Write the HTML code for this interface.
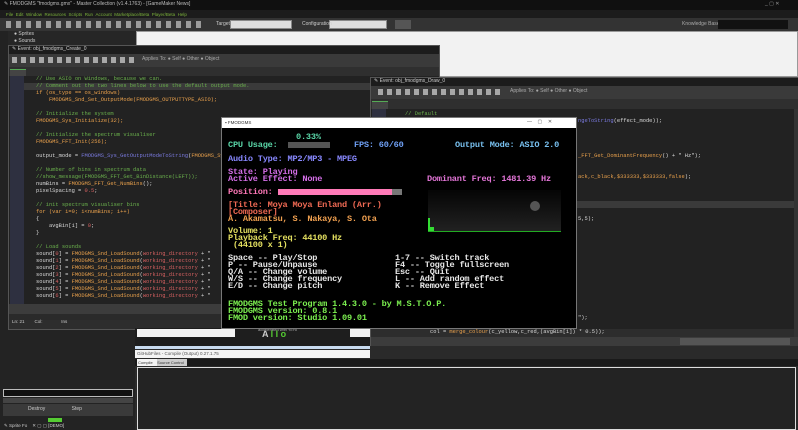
<!DOCTYPE html>
<html><head><meta charset="utf-8"><style>
*{margin:0;padding:0;box-sizing:border-box}
body{width:798px;height:430px;overflow:hidden;background:#2b2b2b;position:relative;font-family:"Liberation Sans",sans-serif}
.a{position:absolute}
.t{font-size:5px;color:#ccc;white-space:nowrap;line-height:7px}
.code{font-family:"Liberation Mono",monospace;font-size:5.4px;line-height:7px;white-space:pre;color:#d8d8d8}
.c{color:#6ab04c}.o{color:#e8a04c}.b{color:#7a7adf}.r{color:#d46060}
.fm{font-family:"Liberation Mono",monospace;font-weight:bold;font-size:8.6px;line-height:7px;white-space:pre;letter-spacing:-0.2px}
.ico{position:absolute;width:7px;height:7px;top:3px}
</style></head><body>
<!-- title bar -->
<div class="a" style="left:0;top:0;width:798px;height:10px;background:#101010"></div>
<div class="a t" style="left:4px;top:1px;color:#bbb">✎ FMODGMS "fmodgms.gmx" - Master Collection (v1.4.1763) - [GameMaker News]</div>
<div class="a t" style="left:765px;top:1px;color:#999">_ ▢ ✕</div>
<!-- menu -->
<div class="a" style="left:0;top:10px;width:798px;height:8px;background:#1c1c1c"></div>
<div class="a t" style="left:6px;top:11px;color:#7bb23a;font-size:4.5px">File &nbsp;Edit &nbsp;Window &nbsp;Resources &nbsp;Scripts &nbsp;Run &nbsp;Account &nbsp;Marketplace/Beta &nbsp;Player/Beta &nbsp;Help</div>
<!-- toolbar -->
<div class="a" style="left:0;top:18px;width:798px;height:13px;background:#333"></div>
<div class="a" style="left:6px;top:21px;width:200px;height:7px;background:repeating-linear-gradient(90deg,#9a9a9a 0 5px,transparent 5px 10px)"></div>
<div class="a" style="left:230px;top:20px;width:62px;height:9px;background:#ddd;border:1px solid #888"></div>
<div class="a" style="left:329px;top:20px;width:58px;height:9px;background:#ddd;border:1px solid #888"></div>
<div class="a t" style="left:216px;top:21px">Target</div>
<div class="a t" style="left:302px;top:21px">Configuration</div>
<div class="a" style="left:395px;top:20px;width:16px;height:9px;background:#555"></div>
<div class="a t" style="left:682px;top:21px;color:#aaa">Knowledge Base</div>
<div class="a" style="left:718px;top:20px;width:70px;height:9px;background:#111"></div>
<!-- resource tree + white box -->
<div class="a" style="left:0;top:31px;width:136px;height:14px;background:#262626"></div>
<div class="a t" style="left:14px;top:31px">● Sprites<br>● Sounds</div>
<div class="a" style="left:136px;top:31px;width:662px;height:46px;background:#f2f2f2;border:1px solid #999"></div>
<div class="a" style="left:0;top:31px;width:8px;height:399px;background:#222"></div>
<!-- left editor -->
<div class="a" style="left:8px;top:45px;width:432px;height:285px;background:#2d2d2d;border:1px solid #555"></div>
<div class="a" style="left:9px;top:46px;width:430px;height:8px;background:#1c1c1c"></div>
<div class="a t" style="left:12px;top:46px">✎ Event: obj_fmodgms_Create_0</div>
<div class="a" style="left:9px;top:54px;width:430px;height:13px;background:#3a3a3a"></div>
<div class="a" style="left:12px;top:57px;width:125px;height:6px;background:repeating-linear-gradient(90deg,#a8a8a8 0 5px,transparent 5px 9px)"></div>
<div class="a t" style="left:142px;top:56px;color:#aaa">Applies To: ● Self ● Other ● Object</div>
<div class="a" style="left:9px;top:67px;width:430px;height:9px;background:#2f2f2f"></div>
<div class="a" style="left:10px;top:69px;width:16px;height:7px;background:#444;border-top:1px solid #5a5"></div>
<div class="a" style="left:9px;top:76px;width:430px;height:228px;background:#222"></div>
<div class="a" style="left:10px;top:76px;width:14px;height:228px;background:#2e3040"></div>
<div class="a" style="left:24px;top:83px;width:415px;height:7px;background:#3a3a3a"></div>
<div class="a code" style="left:36px;top:76px"><span class="c">// Use ASIO on Windows, because we can.</span>
<span class="c">// Comment out the two lines below to use the default output mode.</span>
<span class="o">if (os_type == os_windows)</span>
<span class="o">    FMODGMS_Snd_Set_OutputMode(FMODGMS_OUTPUTTYPE_ASIO);</span>

<span class="c">// Initialize the system</span>
<span class="o">FMODGMS_Sys_Initialize(32);</span>

<span class="c">// Initialize the spectrum visualiser</span>
<span class="o">FMODGMS_FFT_Init(256);</span>

output_mode = <span class="b">FMODGMS_Sys_GetOutputModeToString</span>(<span class="o">FMODGMS_Sys_</span>

<span class="c">// Number of bins in spectrum data</span>
<span class="c">//show_message(FMODGMS_FFT_Get_BinDistance(LEFT));</span>
numBins = <span class="o">FMODGMS_FFT_Get_NumBins</span>();
pixelSpacing = <span class="r">0.5</span>;

<span class="c">// init spectrum visualiser bins</span>
<span class="o">for (var i=0; i&lt;numBins; i++)</span>
{
    avgBin[i] = <span class="r">0</span>;
}

<span class="c">// Load sounds</span>
sound[<span class="r">0</span>] = <span class="o">FMODGMS_Snd_LoadSound</span>(<span class="r">working_directory</span> + "
sound[<span class="r">1</span>] = <span class="o">FMODGMS_Snd_LoadSound</span>(<span class="r">working_directory</span> + "
sound[<span class="r">2</span>] = <span class="o">FMODGMS_Snd_LoadSound</span>(<span class="r">working_directory</span> + "
sound[<span class="r">3</span>] = <span class="o">FMODGMS_Snd_LoadSound</span>(<span class="r">working_directory</span> + "
sound[<span class="r">4</span>] = <span class="o">FMODGMS_Snd_LoadSound</span>(<span class="r">working_directory</span> + "
sound[<span class="r">5</span>] = <span class="o">FMODGMS_Snd_LoadSound</span>(<span class="r">working_directory</span> + "
sound[<span class="r">6</span>] = <span class="o">FMODGMS_Snd_LoadSound</span>(<span class="r">working_directory</span> + "</div>
<div class="a" style="left:9px;top:304px;width:430px;height:10px;background:#3c3c3c"></div>
<div class="a" style="left:9px;top:314px;width:430px;height:6px;background:#2a2a2a"></div>
<div class="a t" style="left:12px;top:318px;font-size:4.5px">Ln: 21 &nbsp;&nbsp;&nbsp;&nbsp;&nbsp;&nbsp; Col: &nbsp;&nbsp;&nbsp;&nbsp;&nbsp;&nbsp;&nbsp;&nbsp;&nbsp;&nbsp;&nbsp;&nbsp;&nbsp; Ins</div>
<!-- lower left panel -->
<div class="a" style="left:0;top:330px;width:135px;height:100px;background:#232323"></div>
<div class="a" style="left:3px;top:389px;width:130px;height:8px;border:1px solid #bbb;background:#111"></div>
<div class="a" style="left:3px;top:398px;width:130px;height:5px;background:#444"></div>
<div class="a" style="left:3px;top:404px;width:130px;height:12px;background:#3a3a3a"></div>
<div class="a t" style="left:28px;top:406px">Destroy &nbsp;&nbsp;&nbsp;&nbsp;&nbsp;&nbsp;&nbsp;&nbsp;&nbsp;&nbsp;&nbsp;&nbsp;&nbsp;&nbsp;&nbsp;&nbsp;&nbsp; Step</div>
<div class="a" style="left:48px;top:418px;width:14px;height:4px;background:#5c3"></div>
<div class="a t" style="left:4px;top:422px;font-size:4.5px">✎ Sprite Fo &nbsp;&nbsp; ✕ ▢ ▢ [DEMO]</div>
<!-- right editor -->
<div class="a" style="left:370px;top:77px;width:428px;height:287px;background:#2d2d2d;border:1px solid #555"></div>
<div class="a" style="left:371px;top:78px;width:427px;height:8px;background:#1c1c1c"></div>
<div class="a t" style="left:374px;top:78px">✎ Event: obj_fmodgms_Draw_0</div>
<div class="a" style="left:371px;top:86px;width:427px;height:13px;background:#3a3a3a"></div>
<div class="a" style="left:378px;top:89px;width:125px;height:6px;background:repeating-linear-gradient(90deg,#a8a8a8 0 5px,transparent 5px 9px)"></div>
<div class="a t" style="left:510px;top:88px;color:#aaa">Applies To: ● Self ● Other ● Object</div>
<div class="a" style="left:371px;top:99px;width:427px;height:10px;background:#2f2f2f"></div>
<div class="a" style="left:372px;top:101px;width:16px;height:8px;background:#444;border-top:1px solid #5a5"></div>
<div class="a" style="left:371px;top:109px;width:423px;height:220px;background:#222"></div>
<div class="a" style="left:372px;top:109px;width:14px;height:220px;background:#2e3040"></div>
<div class="a" style="left:371px;top:201px;width:423px;height:7px;background:#3a3a3a"></div>
<div class="a code" style="left:405px;top:111px"><span class="c">// Default</span></div>
<div class="a code" style="left:578px;top:118px"><span class="b">ngeToString</span>(effect_mode));</div>
<div class="a code" style="left:578px;top:153px"><span class="o">_FFT_Get_DominantFrequency</span>() + " Hz");</div>
<div class="a code" style="left:578px;top:174px"><span class="o">ack,c_black,$333333,$333333,false</span>);</div>
<div class="a code" style="left:578px;top:216px">5,5);</div>
<div class="a code" style="left:578px;top:315px">");</div>
<div class="a code" style="left:430px;top:329px">col = <span class="o">merge_colour</span>(c_yellow,c_red,(avgBin[i]) * 0.5));</div>
<div class="a" style="left:794px;top:109px;width:4px;height:228px;background:#333"></div>
<div class="a" style="left:371px;top:337px;width:427px;height:9px;background:#3c3c3c"></div>
<div class="a" style="left:680px;top:338px;width:110px;height:7px;background:#555"></div>
<div class="a t" style="left:374px;top:357px;font-size:4.5px">Ln: 31 &nbsp;&nbsp;&nbsp;&nbsp;&nbsp;&nbsp; Col: &nbsp;&nbsp;&nbsp;&nbsp;&nbsp;&nbsp;&nbsp;&nbsp;&nbsp;&nbsp;&nbsp;&nbsp;&nbsp; Ins</div>
<!-- middle strip -->
<div class="a" style="left:135px;top:328px;width:235px;height:18px;background:#1e1e1e"></div>
<div class="a" style="left:137px;top:329px;width:98px;height:8px;background:#f4f4f4"></div>
<div class="a t" style="left:258px;top:326px;font-size:4px;color:#aaa">accelerated with YoYo</div>
<div class="a t" style="left:262px;top:331px;font-size:9px;color:#ccc;font-weight:bold">A <span style="color:#5c3">l l o</span></div>
<div class="a" style="left:350px;top:329px;width:20px;height:8px;background:#f4f4f4"></div>
<!-- bottom output window -->
<div class="a" style="left:135px;top:346px;width:663px;height:84px;background:#2a2a2a"></div>
<div class="a" style="left:135px;top:346px;width:235px;height:3px;background:#c9dcf0"></div>
<div class="a" style="left:135px;top:350px;width:235px;height:8px;background:#f4f4f4"></div>
<div class="a t" style="left:137px;top:350px;color:#555;font-size:4.5px">GitHubFiles - Compile (Output) 0.27.1.75</div>
<div class="a" style="left:135px;top:359px;width:663px;height:7px;background:#1a1a1a"></div>
<div class="a" style="left:137px;top:359px;width:20px;height:7px;background:#f4f4f4"></div>
<div class="a" style="left:157px;top:359px;width:30px;height:7px;background:#ccc"></div>
<div class="a t" style="left:138px;top:359px;color:#333;font-size:4px">Compile &nbsp;&nbsp; Source Control</div>
<div class="a" style="left:137px;top:367px;width:659px;height:63px;background:#232323;border:1px solid #ddd"></div>
<!-- FMOD window -->
<div class="a" style="left:221px;top:117px;width:356px;height:212px;background:#000;border:1px solid #777"></div>
<div class="a" style="left:222px;top:118px;width:354px;height:10px;background:#fff"></div>
<div class="a t" style="left:225px;top:119px;color:#333;font-size:4.5px">▪ FMODGMS</div>
<div class="a t" style="left:527px;top:119px;color:#555">— &nbsp;&nbsp; ▢ &nbsp;&nbsp; ✕</div>
<div class="a fm" style="left:296px;top:134px;color:#5ad6a8">0.33%</div>
<div class="a" style="left:288px;top:142px;width:42px;height:6px;background:#555"></div>
<div class="a fm" style="left:228px;top:142px;color:#5ad6a8">CPU Usage:</div>
<div class="a fm" style="left:354px;top:142px;color:#6fa0f5">FPS: 60/60</div>
<div class="a fm" style="left:455px;top:142px;color:#78c0ef">Output Mode: ASIO 2.0</div>
<div class="a fm" style="left:228px;top:156px;color:#8888ff">Audio Type: MP2/MP3 - MPEG</div>
<div class="a fm" style="left:228px;top:169px;color:#d56fe8">State: Playing
Active Effect: None</div>
<div class="a fm" style="left:427px;top:176px;color:#e476d8">Dominant Freq: 1481.39 Hz</div>
<div class="a fm" style="left:228px;top:189px;color:#ff78b8">Position:</div>
<div class="a" style="left:278px;top:189px;width:124px;height:6px;background:#777"></div>
<div class="a" style="left:278px;top:189px;width:114px;height:6px;background:#ff7ab8"></div>
<div class="a fm" style="left:228px;top:202px;color:#f06a54">[Title: Moya Moya Enland (Arr.)
[Composer]</div>
<div class="a fm" style="left:228px;top:216px;color:#f0a050">A. Akamatsu, S. Nakaya, S. Ota</div>
<div class="a fm" style="left:228px;top:228px;color:#e4e060">Volume: 1
Playback Freq: 44100 Hz
 (44100 x 1)</div>
<div class="a" style="left:428px;top:190px;width:133px;height:42px;background:linear-gradient(#050505,#222)"></div>
<div class="a" style="left:530px;top:201px;width:10px;height:10px;border-radius:50%;background:#555"></div>
<div class="a" style="left:428px;top:231px;width:133px;height:1px;background:#2a2"></div>
<div class="a" style="left:428px;top:218px;width:2px;height:13px;background:#3d3"></div>
<div class="a" style="left:430px;top:227px;width:4px;height:4px;background:#3d3"></div>
<div class="a fm" style="left:228px;top:255px;color:#e8e8e8">Space -- Play/Stop
P -- Pause/Unpause
Q/A -- Change volume
W/S -- Change frequency
E/D -- Change pitch</div>
<div class="a fm" style="left:395px;top:255px;color:#e8e8e8">1-7 -- Switch track
F4 -- Toggle fullscreen
Esc -- Quit
L -- Add random effect
K -- Remove Effect</div>
<div class="a fm" style="left:228px;top:301px;color:#7cf050">FMODGMS Test Program 1.4.3.0 - by M.S.T.O.P.
FMODGMS version: 0.8.1
FMOD version: Studio 1.09.01</div>
</body></html>
